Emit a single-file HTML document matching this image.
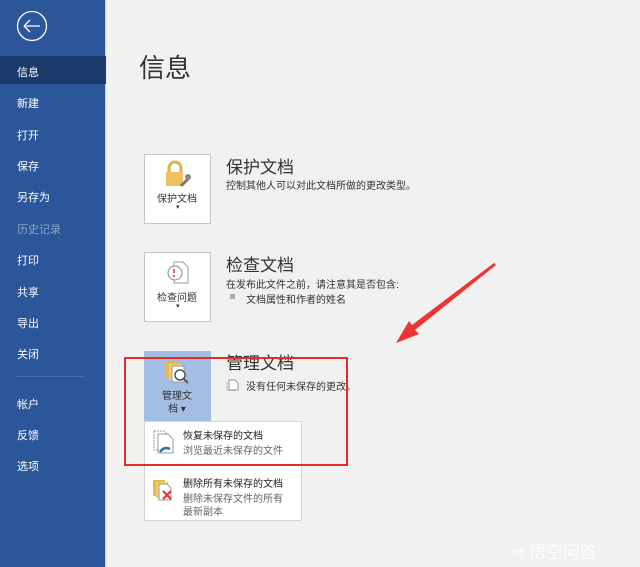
<!DOCTYPE html>
<html><head><meta charset="utf-8"><style>
*{margin:0;padding:0;box-sizing:border-box}
body{width:640px;height:567px;background:#f1f1f1;font-family:"Liberation Sans","Noto Sans CJK SC",sans-serif;position:relative;overflow:hidden;color:#333}
.side{position:absolute;left:0;top:0;width:106px;height:567px;background:#2b579a;border-right:1px solid #c9d3e0}
.side div{position:absolute;left:17px;font-size:11px;color:#fff}
.sel{position:absolute;left:0;top:56px;width:106px;height:28px;background:#1a3a6b}
.a{position:absolute;font-size:12px;white-space:nowrap}
.box{position:absolute;background:#fff;border:1px solid #c6c6c6}
.t{position:absolute;font-size:17px;color:#333;white-space:nowrap}
.s{position:absolute;font-size:10px;color:#333;white-space:nowrap}
</style></head><body>
<div class="side">
<svg style="position:absolute;left:16px;top:10px" width="32" height="32"><circle cx="16" cy="16" r="14.5" fill="none" stroke="#fff" stroke-width="1.3"/><path d="M8 16H24M8 16l6-6M8 16l6 6" stroke="#fff" stroke-width="1.3" fill="none"/></svg>
<div class="sel" style="left:0"></div>
<div style="top:64px">信息</div>
<div style="top:95px">新建</div>
<div style="top:127px">打开</div>
<div style="top:158px">保存</div>
<div style="top:189px">另存为</div>
<div style="top:221px;color:#8ea3c5">历史记录</div>
<div style="top:252px">打印</div>
<div style="top:284px">共享</div>
<div style="top:315px">导出</div>
<div style="top:346px">关闭</div>
<div style="top:376px;left:17px;width:68px;height:1px;background:#4a6fa8"></div>
<div style="top:396px">帐户</div>
<div style="top:427px">反馈</div>
<div style="top:458px">选项</div>
</div>
<div class="a" style="left:139px;top:48px;font-size:26px;color:#333">信息</div>

<div class="box" style="left:144px;top:154px;width:67px;height:70px"></div>
<svg style="position:absolute;left:163px;top:160px" width="30" height="30"><path d="M6 12V8a6 6 0 0 1 12 0v4" fill="none" stroke="#e0b24a" stroke-width="3"/><rect x="3" y="12" width="17" height="14" fill="#f0c060"/><path d="M18 26l8-8" stroke="#777" stroke-width="3"/><circle cx="25" cy="17" r="3" fill="#888"/></svg>
<div class="s" style="left:157px;top:190px;font-size:10px">保护文档</div>
<div class="s" style="left:176px;top:203px;font-size:7px">▾</div>
<div class="t" style="left:226px;top:153px">保护文档</div>
<div class="s" style="left:226px;top:177px">控制其他人可以对此文档所做的更改类型。</div>

<div class="box" style="left:144px;top:252px;width:67px;height:70px"></div>
<svg style="position:absolute;left:164px;top:259px" width="28" height="28"><path d="M10 3h9l5 5v16H10z" fill="#fff" stroke="#999"/><circle cx="11" cy="14" r="7" fill="#fff" stroke="#888"/><path d="M10 10v4M10 16v2" stroke="#d33" stroke-width="1.5"/></svg>
<div class="s" style="left:157px;top:289px">检查问题</div>
<div class="s" style="left:176px;top:302px;font-size:7px">▾</div>
<div class="t" style="left:226px;top:251px">检查文档</div>
<div class="s" style="left:226px;top:276px">在发布此文件之前，请注意其是否包含:</div>
<div style="position:absolute;left:230px;top:294px;width:5px;height:5px;background:#aaa"></div>
<div class="s" style="left:246px;top:291px">文档属性和作者的姓名</div>

<div style="position:absolute;left:144px;top:351px;width:67px;height:71px;background:#a3bde3"></div>
<svg style="position:absolute;left:163px;top:358px" width="30" height="28"><rect x="3" y="3" width="12" height="16" fill="#e8b84a"/><rect x="6" y="6" width="12" height="16" fill="#f3cd70"/><rect x="9" y="8" width="12" height="16" fill="#fff" stroke="#999"/><circle cx="17" cy="17" r="5" fill="#fff" stroke="#555" stroke-width="1.5"/><path d="M21 21l4 4" stroke="#555" stroke-width="2"/></svg>
<div class="s" style="left:162px;top:387px">管理文</div>
<div class="s" style="left:168px;top:400px">档 ▾</div>
<div class="t" style="left:226px;top:349px">管理文档</div>
<svg style="position:absolute;left:226px;top:377px" width="14" height="14"><path d="M3 3h6l3 3v7H3z" fill="#fff" stroke="#999"/><path d="M1 5v9h8" fill="none" stroke="#bbb"/></svg>
<div class="s" style="left:246px;top:378px">没有任何未保存的更改。</div>

<div class="box" style="left:144px;top:421px;width:158px;height:100px;border-color:#d6d6d6"></div>
<svg style="position:absolute;left:150px;top:428px" width="26" height="28"><path d="M4 3h10l5 5v14H4z" fill="#fff" stroke="#999" stroke-dasharray="2 1"/><path d="M8 6h10l5 5v14H8z" fill="#fff" stroke="#999"/><path d="M10 24q4-6 10-3" fill="none" stroke="#2b6cb0" stroke-width="2.5"/></svg>
<div class="s" style="left:183px;top:427px;font-size:10px;color:#222">恢复未保存的文档</div>
<div class="s" style="left:183px;top:442px;color:#666">浏览最近未保存的文件</div>
<svg style="position:absolute;left:150px;top:476px" width="26" height="28"><rect x="3" y="4" width="12" height="16" fill="#e8b84a"/><rect x="6" y="6" width="12" height="16" fill="#f3cd70"/><path d="M9 8h8l4 4v12H9z" fill="#fff" stroke="#999"/><path d="M13 15l8 8M21 15l-8 8" stroke="#d33" stroke-width="2"/></svg>
<div class="s" style="left:183px;top:475px;color:#222">删除所有未保存的文档</div>
<div class="s" style="left:183px;top:490px;color:#666">删除未保存文件的所有</div>
<div class="s" style="left:183px;top:503px;color:#666">最新副本</div>

<div style="position:absolute;left:124px;top:357px;width:224px;height:109px;border:2px solid #e52b2b"></div>
<svg style="position:absolute;left:0;top:0" width="640" height="567"><path d="M494 263L412 325L409 321L396 343L419 334L415 330L496 265Z" fill="#ee3333"/></svg>
<div class="a" style="left:512px;top:538px;color:#fff;font-size:17px;opacity:.85">∞ 悟空问答</div>
</body></html>
